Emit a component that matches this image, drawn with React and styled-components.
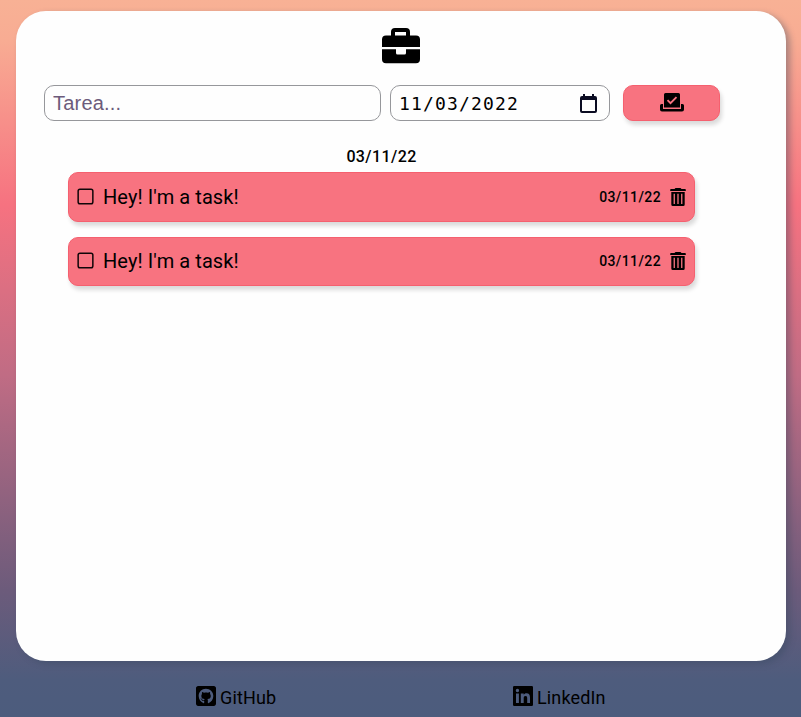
import React from "react";
import styled, { createGlobalStyle } from "styled-components";
import { FaGithubSquare } from "react-icons/fa";

const GlobalStyle = createGlobalStyle`
  * { box-sizing: border-box; }
  body {
    margin: 0;
    height: 717px;
    overflow: hidden;
    font-family: Roboto, sans-serif;
    color: #000;
    background: linear-gradient(#f8b195 0, #f8ac93 40px, #f67280 205px, #c06c84 375px, #6c5b7b 590px, #4e5c7d 680px, #4c5c7d 717px) no-repeat;
  }
`;

const Page = styled.div`
  height: 717px;
  padding: 11px 15px 0 16px;
  display: flex;
  flex-direction: column;
`;

const Card = styled.main`
  height: 650px;
  background: #fefefe;
  border-radius: 30px;
  box-shadow: 4px 3px 6px rgba(53, 72, 95, 0.4);
`;

const Logo = styled.header`
  display: flex;
  justify-content: center;
  padding-top: 17px;
  height: 74px;
`;

const Form = styled.form`
  display: flex;
  height: 36px;
  padding-left: 28px;
`;

const TaskInput = styled.input`
  width: 337px;
  height: 36px;
  margin: 0 9px 0 0;
  padding: 0 8px;
  border: 1px solid #96979b;
  border-radius: 10px;
  outline: none;
  background: transparent;
  font: 20px "Liberation Sans", Arial, sans-serif;
  letter-spacing: 0.2px;
  &::placeholder {
    color: #6c5b7b;
    opacity: 1;
  }
`;

const DateField = styled.div`
  display: flex;
  align-items: center;
  justify-content: space-between;
  width: 220px;
  height: 36px;
  margin-right: 13px;
  padding: 0 12px 0 8px;
  border: 1px solid #96979b;
  border-radius: 10px;
  font: 18px "DejaVu Sans Mono", monospace;
  letter-spacing: 1.15px;
`;

const AddButton = styled.button`
  display: flex;
  align-items: center;
  justify-content: center;
  width: 97px;
  height: 36px;
  padding: 0 0 2px;
  border: 1px solid #f5606f;
  border-radius: 10px;
  background: #f87380;
  color: #000;
  box-shadow: 2px 4px 4px rgba(0, 0, 0, 0.14);
`;

const Group = styled.section`
  width: 627px;
  margin: 24px 0 0 52px;
`;

const GroupDate = styled.h2`
  margin: 0;
  height: 27px;
  font-size: 16px;
  font-weight: 500;
  line-height: 23px;
  letter-spacing: 0.4px;
  text-align: center;
`;

const Task = styled.article`
  display: flex;
  align-items: flex-start;
  height: ${(p) => p.$height}px;
  margin-bottom: 15px;
  padding: ${(p) => p.$height - 35}px 8px 0;
  border: 1px solid #f5606f;
  border-radius: 10px;
  background: #f87380;
  box-shadow: 2px 4px 4px rgba(0, 0, 0, 0.14);
  line-height: 18px;
`;

const TaskName = styled.span`
  flex: 1;
  margin-left: 9px;
  font-size: 20px;
  letter-spacing: 0.08px;
`;

const TaskDate = styled.time`
  margin-right: 9px;
  font-size: 14px;
  font-weight: 500;
  letter-spacing: 0.4px;
`;

const Footer = styled.footer`
  display: flex;
  padding: 25px 0 0 180px;
`;

const FooterLink = styled.a`
  display: flex;
  flex: 0 0 317px;
  height: 22px;
  font-size: 18px;
  line-height: 23px;
  letter-spacing: 0.15px;
  gap: 4px;
  color: #000;
  &:last-child {
    flex-basis: auto;
  }
  svg {
    width: 20px;
    height: 20px;
  }
`;

const BriefcaseIcon = () => (
  <svg width="38" height="36" viewBox="0 0 38 36">
    <path
      fillRule="evenodd"
      d="M9 7.5V4a4 4 0 0 1 4-4h11a4 4 0 0 1 4 4v3.5h6a4 4 0 0 1 4 4V19H0v-7.5a4 4 0 0 1 4-4zM13 4v3.5h11V4z"
    />
    <path d="M0 21.3h14V25a1.5 1.5 0 0 0 1.5 1.5h7A1.5 1.5 0 0 0 24 25v-3.7h14v10a4 4 0 0 1-4 4H4a4 4 0 0 1-4-4z" />
  </svg>
);

const CalendarIcon = () => (
  <svg width="17" height="19" viewBox="0 0 17 19" fill="#0b0c22">
    <path
      fillRule="evenodd"
      d="M2 2h1V0h2v2h7V0h2v2h1a2 2 0 0 1 2 2v13a2 2 0 0 1-2 2H2a2 2 0 0 1-2-2V4a2 2 0 0 1 2-2zM2 6v11h13V6z"
    />
  </svg>
);

const VoteIcon = () => (
  <svg width="24" height="19" viewBox="0 0 24 19">
    <path d="M5.5 0h13A1.5 1.5 0 0 1 20 1.5V14.5H4V1.5A1.5 1.5 0 0 1 5.5 0z" />
    <path d="M7.5 7.2l3 3 6-6" fill="none" stroke="#f87380" strokeWidth="1.9" />
    <path d="M1.5 11H3v5h18v-5h1.5a1.5 1.5 0 0 1 1.5 1.5v4a2 2 0 0 1-2 2H2a2 2 0 0 1-2-2v-4A1.5 1.5 0 0 1 1.5 11z" />
  </svg>
);

const CheckboxIcon = () => (
  <svg width="17" height="17" viewBox="0 0 17 17">
    <rect x="1.15" y="1.15" width="14.7" height="14.7" rx="1.8" fill="none" stroke="#100608" strokeWidth="1.5" />
  </svg>
);

const TrashIcon = () => (
  <svg width="16" height="18" viewBox="0 0 16 18">
    <path d="M5.5 0h5l1 1H15a.8.8 0 0 1 .8.8V3H.2V1.8A.8.8 0 0 1 1 1h3.5z" />
    <path
      fillRule="evenodd"
      d="M1.3 4h13.4v12.5A1.5 1.5 0 0 1 13.2 18H2.8a1.5 1.5 0 0 1-1.5-1.5zM3.6 5.8v10.1h1.3V5.8zM7.35 5.8v10.1h1.3V5.8zM11.1 5.8v10.1h1.3V5.8z"
    />
  </svg>
);

const LinkedinIcon = () => (
  <svg viewBox="0 0 20 20">
    <path
      fillRule="evenodd"
      d="M1.2 0h17.6A1.2 1.2 0 0 1 20 1.2v17.6a1.2 1.2 0 0 1-1.2 1.2H1.2A1.2 1.2 0 0 1 0 18.8V1.2A1.2 1.2 0 0 1 1.2 0zM3 7.5V17h2.9V7.5zM4.45 2.8a1.7 1.7 0 1 0 0 3.4 1.7 1.7 0 0 0 0-3.4zM7.8 7.5V17h2.9v-4.8c0-1.4.5-2.3 1.8-2.3s1.7.9 1.7 2.3V17H17v-5.5c0-2.7-1.1-4.2-3.4-4.2-1.5 0-2.4.7-2.9 1.5V7.5z"
    />
  </svg>
);

const tasks = [
  { id: 1, name: "Hey! I'm a task!", date: "03/11/22", height: 50 },
  { id: 2, name: "Hey! I'm a task!", date: "03/11/22", height: 49 },
];

export default function App() {
  return (
    <>
      <GlobalStyle />
      <Page>
        <Card>
          <Logo><BriefcaseIcon /></Logo>
          <Form onSubmit={(e) => e.preventDefault()}>
            <TaskInput placeholder="Tarea..." />
            <DateField>
              <span>11/03/2022</span>
              <CalendarIcon />
            </DateField>
            <AddButton aria-label="Agregar"><VoteIcon /></AddButton>
          </Form>
          <Group>
            <GroupDate>03/11/22</GroupDate>
            {tasks.map((t) => (
              <Task key={t.id} $height={t.height}>
                <CheckboxIcon />
                <TaskName>{t.name}</TaskName>
                <TaskDate>{t.date}</TaskDate>
                <TrashIcon />
              </Task>
            ))}
          </Group>
        </Card>
        <Footer>
          <FooterLink><FaGithubSquare viewBox="0 32 448 448" />GitHub</FooterLink>
          <FooterLink><LinkedinIcon />LinkedIn</FooterLink>
        </Footer>
      </Page>
    </>
  );
}
